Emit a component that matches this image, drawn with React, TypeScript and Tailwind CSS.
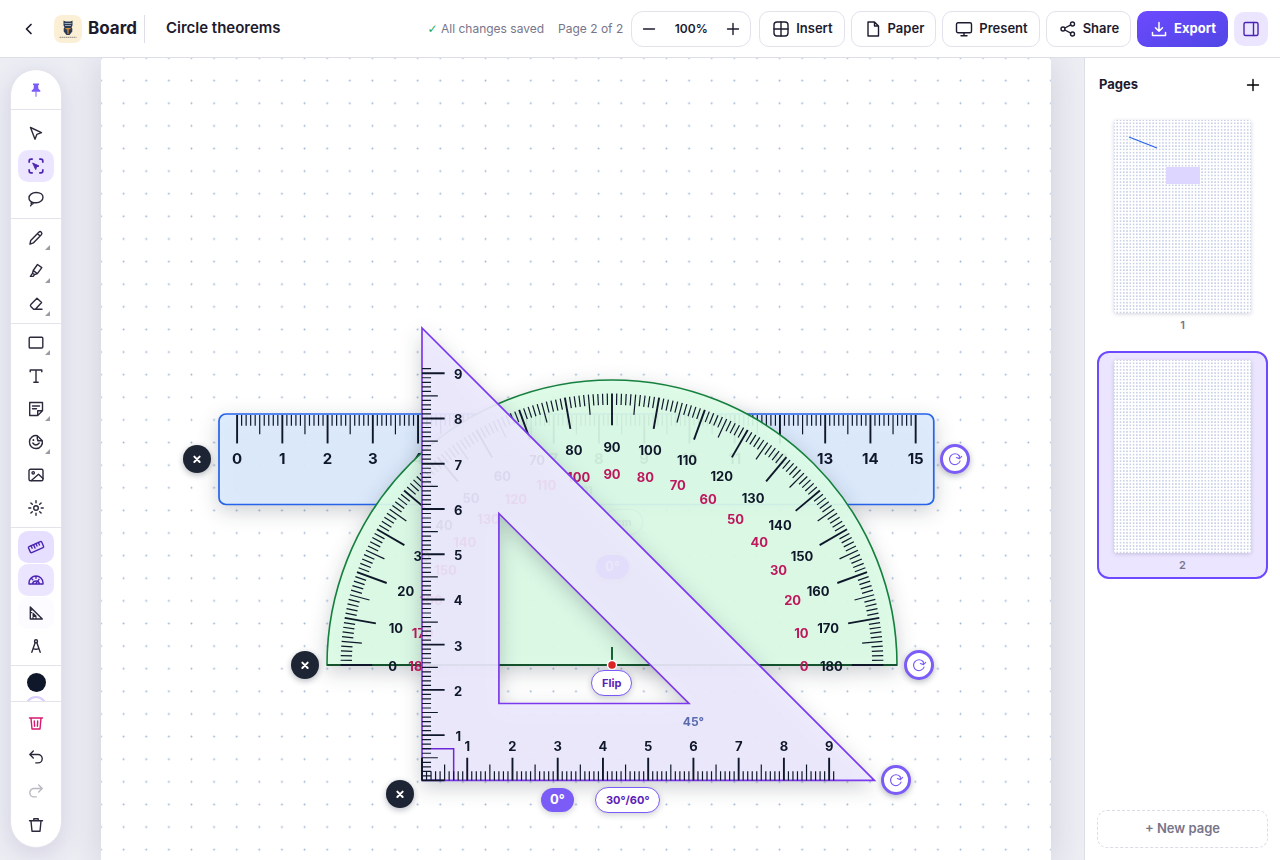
import React, { useState } from "react";
import type { ReactNode } from "react";

// one centimetre on the sheet at 100% zoom (A4, 950px wide)
const CM = 950 / 21;
const INK = "#0f172a";

type IconProps = { children: ReactNode; size?: number; width?: number };

function Icon({ children, size = 18, width = 1.4 }: IconProps) {
  return (
    <svg
      width={size}
      height={size}
      viewBox="0 0 18 18"
      fill="none"
      stroke="currentColor"
      strokeWidth={width}
      strokeLinecap="round"
      strokeLinejoin="round"
      aria-hidden="true"
      className="shrink-0"
    >
      {children}
    </svg>
  );
}

const plusIcon = <Icon><path d="M9 3.5v11M3.5 9h11" /></Icon>;

type Tool = { name: string; icon: ReactNode; menu?: boolean; tone?: string };

const selectTools: Tool[] = [
  { name: "Select", icon: <path d="M3.5 3.5 14.5 8.700 9.900 10.300 8 15.200z" /> },
  {
    name: "Area select",
    tone: "bg-[#ece5ff] text-[#4c24b3]",
    icon: (
      <>
        <path strokeWidth="1.7" strokeLinecap="butt" d="M2.200 5.800V4q0-1.800 1.800-1.800h1.800M12.200 2.200H14q1.800 0 1.800 1.800v1.800M15.800 12.200V14q0 1.800-1.800 1.800h-1.800M5.800 15.800H4q-1.800 0-1.800-1.800v-1.800" />
        <path fill="currentColor" strokeWidth="1" d="M6 6.200 12 9 9.600 9.800 8.800 12.200z" />
      </>
    ),
  },
  {
    name: "Lasso",
    icon: <path d="M5.600 12.400C3.400 11.600 2 10 2 8c0-3 3-5.500 7.200-5.500S16 4.600 16 7.300s-2.800 5.500-6.800 5.500c-1 0-2-.1-2.800-.3-.9-.3-1.900-.1-2.200.6-.3.8.5 1.200 1.300.9.900-.4 1-1.500.3-1.600M4.600 14.200 3.600 15.800" />,
  },
];

const drawTools: Tool[] = [
  { name: "Pen", menu: true, icon: <path d="M3 15.200 3.700 11.400 11.800 3.200q1.300-1.200 2.500 0 1.200 1.200 0 2.500L6.300 13.900zM10.600 4.600l2.300 2.300" /> },
  { name: "Highlighter", menu: true, icon: <path d="M6.200 8.500 10.500 2.500 14.800 5.600 10.400 11.600zM6.200 8.500 5.600 11.200 7.600 12.600 10.400 11.600M5.600 11.200 3.400 14.400H6.200L7.600 12.600" /> },
  { name: "Eraser", menu: true, icon: <path d="M3.800 9.600 10 3.200 14.600 7.500 8.400 14.200H6.600L3.800 11.400q-.8-.9 0-1.800zM6.600 14.200h8.400" /> },
];

const insertTools: Tool[] = [
  { name: "Shape", menu: true, icon: <rect x="2.200" y="3.200" width="13.600" height="10.800" rx="1" /> },
  { name: "Text", icon: <path d="M3.200 4.800V3h11.600v1.800M9 3v12.300M6.800 15.300h4.400" /> },
  { name: "Note", menu: true, icon: <path d="M10.700 15.500H2.700V2.500H15.500V10.700L10.700 15.500V10.700H15.500M5.500 6h7M5.500 8.800h4" /> },
  {
    name: "Sticker",
    menu: true,
    icon: (
      <>
        <path d="M10.300 2.700A6.500 6.500 0 1 0 15.300 7.700M10.300 2.700V6q0 1.700 1.700 1.700h3.300zM5.800 10q3 4 6.400 0" />
        <path strokeWidth="1.800" d="M6.400 7v.2M11 7.400v.1" />
      </>
    ),
  },
  {
    name: "Image",
    icon: (
      <>
        <rect x="2" y="3.300" width="14" height="11.400" rx="1.500" />
        <circle cx="6.200" cy="6.800" r="1.200" />
        <path d="M4.400 14.500 11.500 8.300 16 12.600" />
      </>
    ),
  },
  {
    name: "Laser",
    icon: (
      <>
        <circle cx="9" cy="9" r="2.300" />
        <path d="M9 1.800v2M9 14.200v2M1.800 9h2M14.200 9h2M3.900 3.900l1.400 1.400M12.700 12.700l1.400 1.400M3.900 14.100l1.400-1.400M12.700 5.300l1.400-1.400" />
      </>
    ),
  },
];

const mathsTools: Tool[] = [
  {
    name: "Ruler",
    tone: "bg-[#e7dfff] text-[#4c24b3]",
    icon: (
      <g transform="rotate(-24 9 9)">
        <rect x="1.800" y="5.800" width="14.400" height="6.600" rx="1" />
        <path d="M5 5.800V8.500M7.700 5.800V9.500M10.300 5.800V8.500M13 5.800V8.500" />
      </g>
    ),
  },
  {
    name: "Protractor",
    tone: "bg-[#ece5ff] text-[#4c24b3]",
    icon: <path d="M2 13V11.800A7 6.800 0 0 1 16 11.800V13zM5.600 12.600a3.500 3.500 0 0 1 6.800 0M9 5.200v2M4.500 7.500l1.300 1.200M8.800 12.600 12 8.300" />,
  },
  {
    name: "Set square",
    tone: "bg-[#fcfbff] text-[#2b2a3d]",
    icon: <path d="M3.300 3V15H15.300zM6.200 9.600V12.200H9zM3.300 6h1.500M3.300 8.600h1.500M6 15v-1.200M9 15v-1.200" />,
  },
  {
    name: "Compass",
    icon: (
      <>
        <circle cx="9" cy="4.200" r="1.500" />
        <path d="M8.200 5.600 4.800 15.300M9.800 5.600 13.200 15.300M6.200 11.600Q9 13 11.800 11.600" />
      </>
    ),
  },
];

const historyTools: Tool[] = [
  { name: "Clear page", tone: "text-[#d6196f]", icon: <path d="M2.500 4h13M4 4.200 5 15h8l1-10.800M7.300 7l.3 5.200M10.700 7l-.3 5.200" /> },
  { name: "Undo", icon: <path d="M6.300 3 2.800 6.500 6.300 10M2.800 6.500H11a4.200 4.200 0 0 1 0 8.400H8.800" /> },
  { name: "Redo", tone: "text-[#b9b9c4]", icon: <path d="M11.700 3l3.500 3.500L11.700 10M15.200 6.500H7a4.200 4.200 0 0 0 0 8.400H9.200" /> },
  { name: "Delete", icon: <path d="M2.500 4.800h13M4 5l1 10.200h8L14 5M6.800 4.600V2.700h4.400v1.900" /> },
];

function ToolButton({ tool }: { tool: Tool }) {
  return (
    <button
      type="button"
      aria-label={tool.name}
      className={`relative flex h-8 w-9 items-center justify-center rounded-[10px] ${tool.tone ?? "text-[#2b2a3d]"}`}
    >
      <Icon>{tool.icon}</Icon>
      {tool.menu && (
        <span className="absolute right-1 bottom-1 size-[5px] bg-[#9b9ba6] [clip-path:polygon(100%_0,100%_100%,0_100%)]" />
      )}
    </button>
  );
}

function ToolGroup({ tools, className }: { tools: Tool[]; className: string }) {
  return (
    <div className={`flex flex-col items-center border-b border-[#e3e3ec] ${className}`}>
      {tools.map((tool) => (
        <ToolButton key={tool.name} tool={tool} />
      ))}
    </div>
  );
}

function Toolbar() {
  return (
    <nav
      aria-label="Tools"
      className="z-10 mt-[11px] ml-2.5 flex w-[52px] shrink-0 flex-col self-start rounded-[26px] border border-[#e3e3ec] bg-white shadow-[0_6px_24px_rgba(70,50,130,0.16)]"
    >
      <div className="flex h-10 items-center justify-center border-b border-[#e3e3ec]">
        <button type="button" aria-label="Pin toolbar" className="flex h-8 w-9 items-center justify-center text-[#7c5cf6]">
          <svg width="16" height="16" viewBox="0 0 16 16" fill="currentColor" aria-hidden="true">
            <path d="M5 1.500h6v1.300l-.9.700.3 3.300 1.900 1.700v1.300H3.700V8.500l1.900-1.700.3-3.300-.9-.7z" />
            <path d="M7.300 9.500h1.400v5.300H7.300z" opacity="0.700" />
          </svg>
        </button>
      </div>
      <ToolGroup tools={selectTools} className="gap-px pt-[7px] pb-[3px]" />
      <ToolGroup tools={drawTools} className="gap-px py-[3px]" />
      <ToolGroup tools={insertTools} className="gap-px py-[3px]" />
      <ToolGroup tools={mathsTools} className="gap-px py-[3px]" />
      <div className="flex h-9 flex-col items-center gap-1 overflow-hidden border-b border-[#e3e3ec] pt-[7px]">
        <button type="button" aria-label="Black" className="size-[19px] shrink-0 rounded-full bg-[#0f172a]" />
        <button type="button" aria-label="Violet" className="size-[22px] shrink-0 rounded-full border-2 border-[#d9ceff] bg-white" />
      </div>
      <div className="flex flex-col items-center gap-0.5 pt-[5px] pb-1.5">
        {historyTools.map((tool) => (
          <ToolButton key={tool.name} tool={tool} />
        ))}
      </div>
    </nav>
  );
}

function HeaderButton({ label, children }: { label: string; children: ReactNode }) {
  return (
    <button
      type="button"
      className="flex h-9 items-center gap-1.5 rounded-[10px] border border-[#e2e1ec] bg-white pr-[11px] pl-3 text-[13px] font-semibold text-[#1d1b2e]"
    >
      {children}
      {label}
    </button>
  );
}

function Header() {
  const [zoom, setZoom] = useState(100);
  return (
    <header className="z-20 flex h-[58px] shrink-0 items-center border-b border-[#dedee8] bg-white px-3">
      <a href="#boards" aria-label="Back" className="flex w-[42px] items-center pl-2 text-[#1d1b2e]">
        <Icon width={1.700}><path d="M11 4.500 6.500 9 11 13.500" /></Icon>
      </a>
      <span className="flex size-7 items-center justify-center rounded-lg bg-[#fbf0d5]">
        <svg width="20" height="20" viewBox="0 0 20 20" aria-hidden="true">
          <path d="M5.500 1.500 7.500 2.500h5l2-1v5l-1 2 .8 1v3L11.500 16h-3L5.700 12.500v-3l.8-1-1-2z" fill="#2c3a55" />
          <path d="M6.500 4.500h7M7 6.500h6" stroke="#9aa7b8" />
          <path d="M7.500 9h5v1.200h-1.700L10.500 15h-1l-.3-4.800H7.500z" fill="#d9902f" />
          <path d="M1.500 18.300h17" stroke="#8f8c88" strokeDasharray="1.500 .5" />
        </svg>
      </span>
      <span className="ml-1.5 text-[17px] font-bold text-[#1d1b2e]">Board</span>
      <h1 className="ml-[7px] flex h-7 items-center border-l border-[#dedee8] pl-[21px] text-[15px] font-semibold text-[#1d1b2e]">
        Circle theorems
      </h1>
      <div className="ml-auto flex items-center gap-1.5">
        <span className="mr-2 text-[12px] text-[#77758a]">
          <span className="font-['DejaVu_Sans',sans-serif] text-[#22a85a]">✓</span> All changes saved
        </span>
        <span className="mr-0.5 text-[12px] text-[#77758a]">Page 2 of 2</span>
        <div className="mr-0.5 flex h-9 w-[120px] items-center justify-between rounded-xl border border-[#e2e1ec] px-2 text-[#1d1b2e]">
          <button type="button" aria-label="Zoom out" onClick={() => setZoom(zoom - 10)}>
            <Icon><path d="M3.500 9h11" /></Icon>
          </button>
          <output className="text-[12px] font-semibold">{zoom}%</output>
          <button type="button" aria-label="Zoom in" onClick={() => setZoom(zoom + 10)}>
            {plusIcon}
          </button>
        </div>
        <HeaderButton label="Insert">
          <Icon><rect x="2" y="2" width="14" height="14" rx="3" /><path d="M9 2v14M2 9h14" /></Icon>
        </HeaderButton>
        <HeaderButton label="Paper">
          <Icon><path d="M4 2h6.500L14.500 6v10H4zM10.500 2v4h4" /></Icon>
        </HeaderButton>
        <HeaderButton label="Present">
          <Icon><rect x="1.500" y="2.800" width="15" height="10" rx="1.500" /><path d="M9 13v2.500M6 15.700h6" /></Icon>
        </HeaderButton>
        <HeaderButton label="Share">
          <Icon>
            <circle cx="4" cy="9" r="2" />
            <circle cx="13.500" cy="4" r="2" />
            <circle cx="13.500" cy="14" r="2" />
            <path d="m5.800 8 6-3.100M5.800 10l6 3.100" />
          </Icon>
        </HeaderButton>
        <button
          type="button"
          className="flex h-9 items-center gap-1.5 rounded-[10px] bg-linear-to-br from-[#6d4aff] to-[#5046e5] pr-3 pl-[13px] text-[13px] font-bold text-white"
        >
          <Icon width={1.500}><path d="M9 2.500V11M5.500 7.800 9 11.300l3.500-3.500M2.500 12.500v3h13v-3" /></Icon>
          Export
        </button>
        <button type="button" aria-label="Toggle pages" className="flex size-[34px] items-center justify-center rounded-[10px] bg-[#ece5ff] text-[#4c24b3]">
          <Icon><rect x="2" y="2.500" width="14" height="13" rx="1.500" /><path d="M11.500 2.500v13" /></Icon>
        </button>
      </div>
    </header>
  );
}

const labelProps = {
  textAnchor: "middle" as const,
  fill: INK,
  fontSize: 13,
  fontWeight: 700,
};

// tick length in pixels for the n-th tenth, lengths given in centimetres
function tick(n: number, lengths: [number, number, number]) {
  if (n % 10 === 0) return lengths[0] * CM;
  return (n % 5 === 0 ? lengths[1] : lengths[2]) * CM;
}

function tickWidth(n: number) {
  return n % 10 === 0 ? 1.9 : 1.2;
}

const range = (n: number) => Array.from({ length: n }, (_, i) => i);

function CloseButton({ name, className }: { name: string; className: string }) {
  return (
    <button
      type="button"
      aria-label={`Close ${name}`}
      className={`absolute flex size-7 items-center justify-center rounded-full bg-[#1d2433] text-white shadow-[0_2px_6px_rgba(15,23,42,0.3)] ${className}`}
    >
      <Icon size={12} width={3}><path d="M5 5.500l8 8M13 5.500l-8 8" /></Icon>
    </button>
  );
}

function RotateButton({ name, className }: { name: string; className: string }) {
  return (
    <button
      type="button"
      aria-label={`Rotate ${name}`}
      className={`absolute flex size-[30px] items-center justify-center rounded-full border-3 border-[#7c5cf6] bg-white text-[#7c5cf6] shadow-[0_2px_6px_rgba(15,23,42,0.3)] ${className}`}
    >
      <Icon size={16} width={1.300}>
        <path d="M13.400 5A6.100 6.100 0 1 0 14.700 11.400" />
        <path d="M13.400 5Q14.300 6 14 8.600M10.600 7.300 14 8.600 16.500 6" />
      </Icon>
    </button>
  );
}

function Pill({ children, filled, className }: { children: ReactNode; filled?: boolean; className: string }) {
  const look = filled
    ? "h-6 bg-[#7c5cf6] px-[9px] text-[13px] text-white"
    : "h-[26px] border border-[#7c5cf6] bg-white px-2.5 text-[11px] text-[#5b21b6]";
  return (
    <button
      type="button"
      className={`absolute flex items-center rounded-full font-bold whitespace-nowrap shadow-[0_2px_6px_rgba(15,23,42,0.2)] ${look} ${className}`}
    >
      {children}
    </button>
  );
}

const shapeShadow = "block overflow-visible drop-shadow-[0_6px_10px_rgba(15,23,42,0.22)]";

function Ruler() {
  return (
    <div className="absolute top-[356px] left-[118px]">
      <svg width={15.8 * CM} height={2 * CM} className={shapeShadow} role="img" aria-label="Ruler">
        <rect width={15.8 * CM} height={2 * CM} rx="7" fill="#dbeafe" fillOpacity="0.920" stroke="#2563eb" strokeWidth="1.700" />
        {range(151).map((n) => {
          const x = (0.4 + n / 10) * CM;
          return <path key={n} d={`M${x} 1V${tick(n, [0.65, 0.45, 0.26])}`} stroke={INK} strokeWidth={tickWidth(n)} />;
        })}
        {range(16).map((n) => (
          <text key={n} {...labelProps} x={(0.4 + n) * CM} y="50" fontSize="15">{n}</text>
        ))}
        <text {...labelProps} x="364" y="80" fillOpacity="0.700">cm</text>
      </svg>
      <CloseButton name="ruler" className="top-[31px] -left-9" />
      <RotateButton name="ruler" className="top-[30px] left-[721px]" />
      <Pill className="top-[95px] left-[385px]">cm</Pill>
    </div>
  );
}

function polar(angle: number, r: number) {
  const a = (angle * Math.PI) / 180;
  return [6.3 * CM - r * CM * Math.cos(a), 6.3 * CM - r * CM * Math.sin(a)];
}

function Protractor() {
  const R = 6.3 * CM;
  return (
    <div className="absolute top-[322px] left-[226px]">
      <svg width={2 * R} height={R} className={shapeShadow} role="img" aria-label="Protractor">
        <path d={`M0 ${R}A${R} ${R} 0 0 1 ${2 * R} ${R}z`} fill="#dcfce7" fillOpacity="0.920" stroke="#15803d" strokeWidth="1.600" />
        <path d={`M0 ${R}H${2 * R}`} stroke="#14532d" strokeWidth="2" />
        <path d={`M${R} ${R - 18}V${R}`} stroke="#166534" strokeWidth="2" />
        {range(181).map((n) => {
          const [x1, y1] = polar(n, 6);
          const [x2, y2] = polar(n, 6 - tick(n, [0.7, 0.45, 0.25]) / CM);
          return <path key={n} d={`M${x1} ${y1}L${x2} ${y2}`} stroke={INK} strokeWidth={tickWidth(n)} />;
        })}
        {range(19).map((n) => {
          const [x1, y1] = polar(n * 10, 4.85);
          const [x2, y2] = polar(n * 10, 4.25);
          return (
            <React.Fragment key={n}>
              <text {...labelProps} x={x1} y={y1 + 6}>{n * 10}</text>
              <text {...labelProps} x={x2} y={y2 + 6} fill="#be185d">{180 - n * 10}</text>
            </React.Fragment>
          );
        })}
        <circle cx={R} cy={R} r="4.500" fill="#dc2626" stroke="#fff" strokeWidth="1.500" />
      </svg>
      <CloseButton name="protractor" className="top-[271px] -left-9" />
      <RotateButton name="protractor" className="top-[270px] left-[577px]" />
      <Pill filled className="top-[175px] left-[269px]">0°</Pill>
      <Pill className="top-[290px] left-[264px]">Flip</Pill>
    </div>
  );
}

function SetSquare() {
  const S = 10 * CM;
  const a = 1.7 * CM;
  const b = 5.9 * CM;
  return (
    <div className="pointer-events-none absolute top-[270px] left-[321px] *:pointer-events-auto">
      <svg width={S} height={S} className={shapeShadow} role="img" aria-label="Set square">
        <path
          d={`M0 0V${S}H${S}zM${a} ${S - b}L${b} ${S - a}H${a}z`}
          fill="#ede9fe"
          fillOpacity="0.920"
          fillRule="evenodd"
          stroke="#7c3aed"
          strokeWidth="1.700"
        />
        <path d={`M0 ${S - 0.7 * CM}H${0.7 * CM}V${S}`} fill="none" stroke="#6d28d9" strokeWidth="1.500" />
        {range(92).map((n) => {
          const d = (n / 10) * CM;
          const len = tick(n, [0.5, 0.35, 0.2]);
          return <path key={n} d={`M${d} ${S}v${-len}M0 ${S - d}h${len}`} stroke={INK} strokeWidth={tickWidth(n)} />;
        })}
        {range(9).map((n) => (
          <React.Fragment key={n}>
            <text {...labelProps} x={(n + 1) * CM} y={S - 29}>{n + 1}</text>
            <text {...labelProps} x={0.8 * CM} y={S - (n + 1) * CM + 6}>{n + 1}</text>
          </React.Fragment>
        ))}
        <text {...labelProps} x={6 * CM} y={S - 54} fontSize="12" fill="#5b6cae">45°</text>
      </svg>
      <CloseButton name="set square" className="top-[452px] -left-9" />
      <RotateButton name="set square" className="top-[437px] left-[459px]" />
      <Pill filled className="top-[460px] left-[119px]">0°</Pill>
      <Pill className="top-[459px] left-[173px]">30°/60°</Pill>
    </div>
  );
}

function DotGrid({ id, step, r, fill }: { id: string; step: number; r: number; fill: string }) {
  return (
    <svg className="absolute inset-0 size-full" aria-hidden="true">
      <pattern id={id} x={-step / 2} y={-step / 2} width={step} height={step} patternUnits="userSpaceOnUse">
        <circle cx={step / 2} cy={step / 2} r={r} fill={fill} />
      </pattern>
      <rect width="100%" height="100%" fill={`url(#${id})`} />
    </svg>
  );
}

function Sheet() {
  return (
    <main className="flex min-w-0 flex-1 justify-center pl-1.5">
      <div className="relative h-full w-full max-w-[950px] bg-white shadow-[0_4px_32px_rgba(40,35,80,0.16)]">
        <DotGrid id="sheet-dots" step={CM / 2} r={0.95} fill="#9db3d3" />
        <Ruler />
        <Protractor />
        <SetSquare />
      </div>
    </main>
  );
}

function PageCard({ page, active, children }: { page: number; active?: boolean; children?: ReactNode }) {
  return (
    <button
      type="button"
      aria-label={`Page ${page}`}
      className={`flex flex-col items-center rounded-xl border-2 px-[15px] pt-[7px] pb-1 ${active ? "border-[#6d4aff] bg-[#ece5ff]" : "border-transparent"}`}
    >
      <span className="relative block aspect-[137/193] w-full overflow-hidden rounded-xs bg-white shadow-[0_1px_4px_rgba(40,35,80,0.2)]">
        <DotGrid id={`thumb-${page}`} step={137 / 42} r={0.7} fill="#97a8d0" />
        {children}
      </span>
      <span className="mt-1 text-[11px] leading-4 font-semibold text-[#77758a]">{page}</span>
    </button>
  );
}

function PagesPanel() {
  return (
    <aside className="z-10 flex w-[196px] shrink-0 flex-col border-l border-[#dedee8] bg-white px-3 pb-3">
      <div className="flex h-[53px] items-center justify-between pr-1.5 pl-0.5">
        <h2 className="text-[13px] font-bold text-[#1d1b2e]">Pages</h2>
        <button type="button" aria-label="Add page">{plusIcon}</button>
      </div>
      <div className="flex flex-col gap-3">
        <PageCard page={1}>
          <svg className="absolute inset-0 size-full" viewBox="0 0 137 193" aria-hidden="true">
            <path d="M15 17 43 28" stroke="#2563eb" strokeWidth="1.200" />
            <rect x="52" y="47" width="34" height="17" fill="#ddd6fe" />
          </svg>
        </PageCard>
        <PageCard page={2} active />
      </div>
      <button
        type="button"
        className="mt-auto h-[38px] rounded-[10px] border border-dashed border-[#dcdbe6] text-[13px] font-semibold text-[#77758a]"
      >
        + New page
      </button>
    </aside>
  );
}

export default function App() {
  return (
    <div className="flex h-screen flex-col overflow-hidden bg-[#edeef4] font-['Inter','Liberation_Sans',sans-serif]">
      <Header />
      <div className="flex min-h-0 flex-1">
        <Toolbar />
        <Sheet />
        <PagesPanel />
      </div>
    </div>
  );
}
